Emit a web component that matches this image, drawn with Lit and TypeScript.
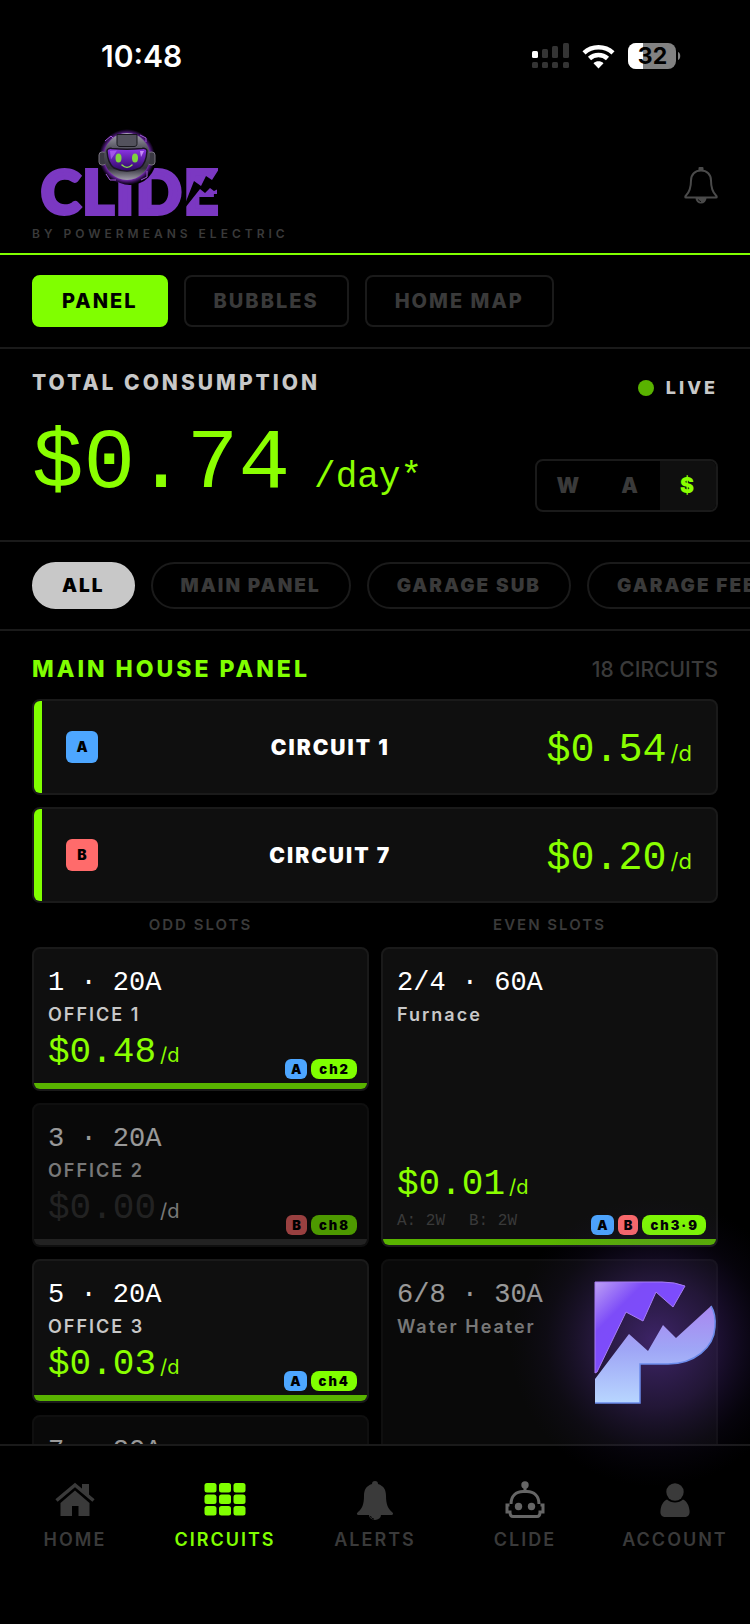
import { LitElement, html, css, svg, nothing } from "lit";
import { customElement, property, state } from "lit/decorators.js";
import { classMap } from "lit/directives/class-map.js";

interface Breaker {
    slot: string;
    name?: string;
    cost?: string;
    legs?: string[];
    channel?: string;
    phases?: string[];
    idle?: boolean;
    double?: boolean;
}

const FEEDS = [
    { leg: "A", name: "CIRCUIT 1", cost: "$0.54" },
    { leg: "B", name: "CIRCUIT 7", cost: "$0.20" },
];

const BREAKERS: Breaker[] = [
    { slot: "1 · 20A", name: "OFFICE 1", cost: "$0.48", phases: ["A"], channel: "ch2" },
    { slot: "2/4 · 60A", name: "Furnace", cost: "$0.01", legs: ["A: 2W", "B: 2W"], phases: ["A", "B"], channel: "ch3·9", double: true },
    { slot: "3 · 20A", name: "OFFICE 2", cost: "$0.00", phases: ["B"], channel: "ch8", idle: true },
    { slot: "5 · 20A", name: "OFFICE 3", cost: "$0.03", phases: ["A"], channel: "ch4" },
    { slot: "6/8 · 30A", name: "Water Heater", idle: true, double: true },
    { slot: "7 · 20A", idle: true },
];

const NAV_ICONS: Record<string, unknown> = {
    HOME: svg`
        <path d="M1.500 18.500 20 3 38.500 18.500" fill="none" stroke="currentColor" stroke-width="3.500"/>
        <path d="M27 2h7v13l-7-6z"/>
        <path d="M5.500 21 20 8.500 34.500 21V34H23.500V24H17V34H5.500z"/>`,
    CIRCUITS: svg`
        ${[1, 12.5, 24].map(y => [0, 14.5, 29].map(x => svg`<rect x=${x - 0.5} y=${y} width="12" height="9.500" rx="2.500"/>`))}`,
    ALERTS: svg`
        <path d="M20 -1c-2 0-3 1-3 3-6 2-8 6-8 12 0 8-2 13-6 16-2 2-1 3 1 3h32c2 0 3-1 1-3-4-3-6-8-6-16 0-6-2-10-8-12 0-2-1-3-3-3z"/>
        <path d="M14 33a6 5 0 0 0 12 0z"/>
        <path d="M15.500 34c.5 2 2 3 3.500 3" fill="none" stroke="#000" stroke-width="1"/>`,
    CLIDE: svg`
        <g fill="none" stroke="currentColor" stroke-width="3">
            <path d="M20 9V3"/>
            <path d="M6 22C6 14 11 9.500 18 9.500h4c7 0 12 4.500 12 12.500"/>
            <path d="M4.500 23H2v7h3c0 3 1 4.500 3 4.500h24c2 0 3-1.500 3-4.500h3v-7h-2.500"/>
        </g>
        <circle cx="20" cy="3" r="3.700"/>
        <circle cx="13.500" cy="24.500" r="3.700"/>
        <circle cx="26.500" cy="24.500" r="3.700"/>`,
    ACCOUNT: svg`
        <circle cx="20" cy="10" r="8.700"/>
        <path d="M12 17.500c4 4 12 4 16 0 4 2 6 6 6.500 11 .5 4-1 6.500-5 6.500h-19c-4 0-5.500-2.500-5-6.500.5-5 2.500-9 6.500-11z"/>`,
};

@customElement("breaker-card")
export class BreakerCard extends LitElement {
    static styles = css`
        :host {
            display: block;
        }
        .card {
            display: flex;
            flex-direction: column;
            height: 100%;
            min-height: 144px;
            box-sizing: border-box;
            background: #0f0f0f;
            border: 2px solid #1a1a1a;
            border-radius: 8px;
            overflow: hidden;
        }
        .idle {
            opacity: 0.6;
        }
        .body {
            flex: 1;
            display: flex;
            flex-direction: column;
            padding: 16px 10px 4px 14px;
        }
        .slot {
            font: 400 27px/36px "Liberation Mono", monospace;
            color: #fff;
            white-space: pre;
        }
        .name {
            margin-top: 2px;
            font-size: 18px;
            line-height: 24px;
            font-weight: 600;
            letter-spacing: 2px;
            color: #c8c8c8;
        }
        .foot {
            flex: 1;
            display: flex;
            justify-content: space-between;
            align-items: flex-end;
        }
        .reading {
            padding-bottom: 4px;
        }
        .cost {
            font: 400 36px/44px "Liberation Mono", monospace;
            color: #8aff00;
            white-space: nowrap;
        }
        .unit {
            font: 400 20px/24px Inter, sans-serif;
            margin-left: 4px;
        }
        .idle .cost {
            color: #3a3a3a;
        }
        .idle .unit {
            color: #c8c8c8;
        }
        .legs {
            display: flex;
            gap: 24px;
            font: 400 16px/20px "Liberation Mono", monospace;
            color: #3a3a3a;
            margin-top: 4px;
        }
        .badges {
            display: flex;
            gap: 4px;
        }
        .badge {
            box-sizing: border-box;
            font-size: 13px;
            line-height: 20px;
            font-weight: 900;
            padding: 0 5px 0 6px;
            border-radius: 6px;
            color: #000;
            letter-spacing: 1px;
            background: #4da6ff;
        }
        .b {
            background: #ff6b6b;
        }
        .channel {
            background: #80ff00;
            border-radius: 8px;
            padding: 0 7px 0 8px;
            letter-spacing: 2px;
        }
        .bar {
            height: 6px;
            background: #59b300;
        }
        .idle .bar {
            background: #3a3a3a;
        }
    `;

    @property({ attribute: false }) breaker!: Breaker;

    render() {
        const b = this.breaker;
        return html`
            <div class=${classMap({ card: true, idle: !!b.idle })}>
                <div class="body">
                    <div class="slot">${b.slot}</div>
                    ${b.name ? html`<div class="name">${b.name}</div>` : nothing}
                    <div class="foot">
                        <div class="reading">
                            ${b.cost ? html`<div class="cost">${b.cost}<span class="unit">/d</span></div>` : nothing}
                            ${b.legs ? html`<div class="legs">${b.legs.map(l => html`<span>${l}</span>`)}</div>` : nothing}
                        </div>
                        <div class="badges">
                            ${(b.phases ?? []).map(p => html`<span class="badge ${p.toLowerCase()}">${p}</span>`)}
                            ${b.channel ? html`<span class="badge channel">${b.channel}</span>` : nothing}
                        </div>
                    </div>
                </div>
                <div class="bar"></div>
            </div>
        `;
    }
}

@customElement("app-root")
export class AppRoot extends LitElement {
    static styles = css`
        :host {
            display: flex;
            flex-direction: column;
            position: relative;
            height: 100vh;
            overflow: hidden;
            background: #000;
            color: #fff;
            font-family: Inter, "Liberation Sans", sans-serif;
        }
        button {
            font: inherit;
            color: inherit;
            background: none;
            border: none;
            margin: 0;
            padding: 0;
            cursor: pointer;
            white-space: nowrap;
        }
        .status {
            display: flex;
            justify-content: space-between;
            align-items: center;
            height: 112px;
            padding: 0 69px 0 101px;
            box-sizing: border-box;
        }
        .time {
            font-size: 30px;
            line-height: 36px;
            font-weight: 600;
        }
        .indicators {
            display: flex;
            align-items: center;
            gap: 13px;
        }
        .header {
            display: flex;
            justify-content: space-between;
            align-items: center;
            padding: 15px 32px 10px;
            border-bottom: 2px solid #80ff00;
        }
        .logo {
            display: block;
        }
        .logo text {
            font-family: Lato, Inter, sans-serif;
            font-weight: 900;
            font-size: 60px;
            letter-spacing: 2px;
        }
        .byline {
            font-size: 12px;
            line-height: 18px;
            font-weight: 600;
            letter-spacing: 4px;
            color: #3a3a3a;
            margin-top: 6px;
        }
        .bell {
            color: #4a4a4a;
        }
        .bell svg {
            display: block;
        }
        .tabs, .filters {
            display: flex;
            gap: 16px;
            padding: 20px 32px;
            border-bottom: 2px solid #1a1a1a;
            overflow: hidden;
        }
        .tab, .pill {
            flex: none;
            border: 2px solid #1a1a1a;
            letter-spacing: 2px;
            color: #3a3a3a;
            padding: 0 28px;
        }
        .tab {
            font-size: 20px;
            font-weight: 800;
            line-height: 48px;
            border-radius: 8px;
        }
        .pill {
            font-size: 19px;
            font-weight: 900;
            line-height: 43px;
            border-radius: 24px;
        }
        .tab.on {
            background: #80ff00;
            border-color: #80ff00;
            color: #000;
        }
        .pill.on {
            background: #c8c8c8;
            border-color: #c8c8c8;
            color: #000;
        }
        .total {
            display: flex;
            justify-content: space-between;
            padding: 20px 32px 28px;
            border-bottom: 2px solid #1a1a1a;
        }
        .label {
            font-size: 21px;
            line-height: 28px;
            font-weight: 800;
            letter-spacing: 3px;
            color: #c8c8c8;
        }
        .amount {
            display: flex;
            align-items: baseline;
            gap: 24px;
            margin-top: 19px;
            font: 400 86px/96px "Liberation Mono", monospace;
            color: #8aff00;
        }
        .per {
            font-size: 36px;
            line-height: 40px;
        }
        .side {
            display: flex;
            flex-direction: column;
            justify-content: space-between;
            align-items: flex-end;
            padding-top: 7px;
        }
        .live {
            display: flex;
            align-items: center;
            gap: 12px;
            font-size: 18px;
            line-height: 24px;
            font-weight: 800;
            letter-spacing: 3px;
            color: #c8c8c8;
        }
        .dot {
            width: 16px;
            height: 16px;
            border-radius: 50%;
            background: #59b300;
        }
        .units {
            display: flex;
            border: 2px solid #1a1a1a;
            border-radius: 8px;
            overflow: hidden;
        }
        .units button {
            padding: 0 20px;
            font-size: 21px;
            line-height: 49px;
            font-weight: 900;
            letter-spacing: 2px;
            color: #3a3a3a;
        }
        .units .on {
            background: #0f0f0f;
            color: #8aff00;
        }
        .content {
            flex: 1;
            min-height: 0;
            overflow: hidden;
            padding: 22px 32px 0;
        }
        .section {
            display: flex;
            justify-content: space-between;
            align-items: center;
            margin-bottom: 14px;
        }
        .section h2 {
            margin: 0;
            font-size: 23px;
            line-height: 32px;
            font-weight: 800;
            letter-spacing: 3px;
            color: #80ff00;
        }
        .count {
            font-size: 21px;
            font-weight: 500;
            color: #3a3a3a;
        }
        .feed {
            display: flex;
            align-items: center;
            justify-content: space-between;
            height: 96px;
            box-sizing: border-box;
            margin-bottom: 12px;
            padding-right: 24px;
            background: #0f0f0f;
            border: 2px solid #1a1a1a;
            border-radius: 8px;
            overflow: hidden;
        }
        .stripe {
            align-self: stretch;
            width: 8px;
            margin-right: 24px;
            background: #80ff00;
        }
        .leg {
            width: 32px;
            border-radius: 6px;
            background: #4da6ff;
            color: #000;
            font-size: 14px;
            line-height: 32px;
            font-weight: 900;
            text-align: center;
        }
        .leg.b {
            background: #ff6b6b;
        }
        .feed-name {
            flex: 1;
            padding-left: 16px;
            text-align: center;
            font-size: 21px;
            font-weight: 900;
            letter-spacing: 2px;
        }
        .feed-cost {
            padding-top: 8px;
            font: 400 40px/48px "Liberation Mono", monospace;
            color: #8aff00;
        }
        .feed-unit {
            font: 400 22px/24px Inter, sans-serif;
            margin-left: 4px;
        }
        .slots {
            display: grid;
            grid-template-columns: 1fr 1fr;
            grid-auto-rows: minmax(144px, auto);
            grid-auto-flow: dense;
            gap: 12px;
        }
        .heads {
            display: grid;
            grid-template-columns: 1fr 1fr;
            gap: 12px;
            margin-bottom: 12px;
            text-align: center;
            font-size: 15px;
            line-height: 20px;
            font-weight: 600;
            letter-spacing: 2px;
            color: #3a3a3a;
        }
        .odd {
            grid-column: 1;
        }
        .even {
            grid-column: 2;
            grid-row: span 2;
        }
        .nav {
            display: grid;
            grid-template-columns: repeat(5, 1fr);
            height: 180px;
            box-sizing: border-box;
            padding-top: 36px;
            border-top: 2px solid #1a1a1a;
            background: #000;
        }
        .nav button {
            display: flex;
            flex-direction: column;
            align-items: center;
            align-self: start;
            gap: 10px;
            font-size: 18px;
            line-height: 24px;
            font-weight: 600;
            letter-spacing: 2px;
            color: #3a3a3a;
        }
        .nav svg {
            display: block;
            fill: currentColor;
            overflow: visible;
        }
        .nav .robot svg {
            color: #666;
        }
        .nav .on {
            color: #80ff00;
        }
        .assistant {
            position: absolute;
            right: 33px;
            bottom: 220px;
        }
        .assistant svg {
            display: block;
            overflow: visible;
        }
    `;

    @state() private view = "PANEL";
    @state() private unit = "$";
    @state() private filter = "ALL";
    @state() private page = "CIRCUITS";

    private renderStatus() {
        return html`
            <div class="status">
                <div class="time">10:48</div>
                <div class="indicators">
                    <svg width="37" height="26" viewBox="0 0 37 26" fill="#343434">
                        <rect x="0" y="8" width="6" height="7" rx="1.500" fill="#fff"/>
                        <rect x="10" y="6" width="6" height="9" rx="1.500"/>
                        <rect x="20" y="3" width="6" height="12" rx="1.500"/>
                        <rect x="31" y="0" width="6" height="15" rx="1.500"/>
                        ${[0, 10, 20, 31].map(x => svg`<rect x=${x} y="19" width="6" height="6" rx="1.500"/>`)}
                    </svg>
                    <svg width="33" height="25" viewBox="0 0 33 25" fill="none" stroke="#fff" stroke-width="4.500">
                        <path d="M2 8.800C10 1.300 23 1.300 31 8.800"/>
                        <path d="M7.500 14.500C12.500 9.800 20.500 9.800 25.500 14.500"/>
                        <path d="M16.500 24.500l-5-5.200c2.800-2.600 7.200-2.600 10 0z" fill="#fff" stroke="none"/>
                    </svg>
                    <svg width="53" height="26" viewBox="0 0 53 26">
                        <clipPath id="cell"><rect width="48" height="26" rx="8"/></clipPath>
                        <rect width="48" height="26" rx="8" fill="#828282"/>
                        <rect width="15" height="26" fill="#fff" clip-path="url(#cell)"/>
                        <path d="M50 9c3 1 3 7 0 8z" fill="#828282"/>
                        <text x="24.500" y="21" text-anchor="middle" font-family="Inter, sans-serif" font-size="23" font-weight="700">32</text>
                    </svg>
                </div>
            </div>
        `;
    }

    private renderLogo() {
        return html`
            <svg class="logo" width="200" height="92" viewBox="0 0 200 92" role="img" aria-label="CLIDE">
                <defs>
                    <radialGradient id="aura">
                        <stop offset="0.800" stop-color="#a33cf0" stop-opacity="0.800"/>
                        <stop offset="1" stop-color="#7a1fd0" stop-opacity="0"/>
                    </radialGradient>
                    <linearGradient id="shell" x1="0" y1="0" x2="0" y2="1">
                        <stop offset="0" stop-color="#a5a3b0"/>
                        <stop offset="0.300" stop-color="#5a5965"/>
                        <stop offset="0.750" stop-color="#34343c"/>
                        <stop offset="1" stop-color="#a09cab"/>
                    </linearGradient>
                    <linearGradient id="visor" x1="0" y1="0" x2="0" y2="1">
                        <stop offset="0" stop-color="#8f35ea"/>
                        <stop offset="1" stop-color="#2c0763"/>
                    </linearGradient>
                </defs>
                <text x="9" y="87" fill="#7b38c2" stroke="#7b38c2" stroke-width="4">CLIDE</text>
                <!-- power bolt cut through the last letter -->
                <path d="M160 50h25v17h-25z" fill="#7b38c2"/>
                <path d="M187 42l-7 11-6-4-5 10-7-5-9 23v4l15-19 5 4 5-5 4 3 6-3z" fill="#000"/>
                <circle cx="98" cy="32" r="26" fill="#000"/>
                <circle cx="95" cy="30" r="28" fill="url(#aura)"/>
                <path d="M73 14l6-5 3 3M108 8l6 3 0 4M74 47l4 6 6 0M109 53l6-3 0-6" fill="none" stroke="#a55ade" stroke-width="1"/>
                <rect x="67" y="25" width="7" height="13" rx="3" fill="#3a3942" stroke="#77727f" stroke-width="1"/>
                <rect x="116" y="25" width="7" height="13" rx="3" fill="#3a3942" stroke="#77727f" stroke-width="1"/>
                <ellipse cx="95" cy="29.500" rx="23" ry="23.500" fill="url(#shell)"/>
                <path d="M85 7.500h20v9c0 2-1 3-3 3H88c-2 0-3-1-3-3z" fill="#53525d" stroke="#17171c" stroke-width="1"/>
                <path d="M75 24c0-2 2-3 5-2.500 10 1 20 1 30 0 3-.5 5 .5 5 2.500-.5 8-3 14-7 17-8 4-18 4-26 0-4-3-6.500-9-7-17z" fill="url(#visor)" stroke="#1a1422" stroke-width="1.500"/>
                <path d="M78 24l7-.5-6 9z" fill="#b46af5" opacity="0.700"/>
                <path d="M112 24l-4 0 1 6z" fill="#d9a9ff" opacity="0.800"/>
                <ellipse cx="86.500" cy="31" rx="3" ry="4.500" fill="#7ed33f"/>
                <ellipse cx="103" cy="31" rx="3" ry="4.500" fill="#7ed33f"/>
                <path d="M90 38c3 3 7 3 10 0" fill="none" stroke="#8be04c" stroke-width="1.500" stroke-linecap="round"/>
            </svg>
        `;
    }

    private renderAssistant() {
        return html`
            <button class="assistant" aria-label="Assistant">
                <svg width="122" height="122" viewBox="0 0 122 122">
                    <defs>
                        <radialGradient id="glow">
                            <stop offset="0" stop-color="#7340c8" stop-opacity="0.500"/>
                            <stop offset="0.450" stop-color="#6a3cb8" stop-opacity="0.260"/>
                            <stop offset="0.750" stop-color="#4b2c90" stop-opacity="0.080"/>
                            <stop offset="1" stop-color="#2a1a60" stop-opacity="0"/>
                        </radialGradient>
                        <linearGradient id="upper" x1="0" y1="0" x2="0.700" y2="0.700">
                            <stop offset="0" stop-color="#bda0f5"/>
                            <stop offset="0.400" stop-color="#7d4cf8"/>
                            <stop offset="1" stop-color="#7d4cff"/>
                        </linearGradient>
                        <linearGradient id="lower" x1="0" y1="0" x2="0" y2="1">
                            <stop offset="0" stop-color="#a987f0"/>
                            <stop offset="0.450" stop-color="#9fa6f6"/>
                            <stop offset="1" stop-color="#b8d6ff"/>
                        </linearGradient>
                    </defs>
                    <circle cx="60" cy="60" r="145" fill="url(#glow)"/>
                    <path d="M0 0H67Q80 0 90 4L78 25 61 10 48 39 31 30 2 90 0 91z" fill="url(#upper)" stroke="#a77cf5" stroke-width="1"/>
                    <path d="M0 97 34 52 53 69 68 43 81 56 116 24Q121 32 120 45C119 66 99 82 73 82H45V121H0z" fill="url(#lower)"/>
                    <path d="M116 24Q121 32 120 45C119 66 99 82 73 82H45V121H0" fill="none" stroke="#6b8bea" stroke-width="1.500"/>
                </svg>
            </button>
        `;
    }

    render() {
        return html`
            ${this.renderStatus()}
            <header class="header">
                <div>
                    ${this.renderLogo()}
                    <div class="byline">BY POWERMEANS ELECTRIC</div>
                </div>
                <button class="bell" aria-label="Notifications">
                    <svg width="34" height="38" viewBox="0 0 34 38" fill="none" stroke="currentColor" stroke-width="2" stroke-linejoin="round">
                        <path d="M17 4.500c-6 0-10 4-10 10 0 8-2 12-5 15-1 1-1 2 0 2h30c1 0 1-1 0-2-3-3-5-7-5-15 0-6-4-10-10-10z"/>
                        <path d="M15.500 4V2h3v2" fill="currentColor"/>
                        <path d="M12.500 32a4.500 4.500 0 0 0 9 0z" fill="currentColor"/>
                        <path d="M14.500 33.500c.5 1.500 1.500 2 2.500 2" stroke="#000" stroke-width="1"/>
                    </svg>
                </button>
            </header>
            <div class="tabs">
                ${["PANEL", "BUBBLES", "HOME MAP"].map(t => html`
                    <button class=${classMap({ tab: true, on: t === this.view })} @click=${() => (this.view = t)}>${t}</button>`)}
            </div>
            <section class="total">
                <div>
                    <div class="label">TOTAL CONSUMPTION</div>
                    <div class="amount"><span>$0.74</span><span class="per">/day*</span></div>
                </div>
                <div class="side">
                    <div class="live"><span class="dot"></span>LIVE</div>
                    <div class="units">
                        ${["W", "A", "$"].map(u => html`
                            <button class=${classMap({ on: u === this.unit })} @click=${() => (this.unit = u)}>${u}</button>`)}
                    </div>
                </div>
            </section>
            <div class="filters">
                ${["ALL", "MAIN PANEL", "GARAGE SUB", "GARAGE FEED"].map(f => html`
                    <button class=${classMap({ pill: true, on: f === this.filter })} @click=${() => (this.filter = f)}>${f}</button>`)}
            </div>
            <main class="content">
                <div class="section">
                    <h2>MAIN HOUSE PANEL</h2>
                    <span class="count">18 CIRCUITS</span>
                </div>
                ${FEEDS.map(f => html`
                    <div class="feed">
                        <span class="stripe"></span>
                        <span class="leg ${f.leg.toLowerCase()}">${f.leg}</span>
                        <span class="feed-name">${f.name}</span>
                        <span class="feed-cost">${f.cost}<span class="feed-unit">/d</span></span>
                    </div>`)}
                <div class="heads"><span>ODD SLOTS</span><span>EVEN SLOTS</span></div>
                <div class="slots">
                    ${BREAKERS.map(b => html`<breaker-card class=${b.double ? "even" : "odd"} .breaker=${b}></breaker-card>`)}
                </div>
            </main>
            <nav class="nav">
                ${Object.entries(NAV_ICONS).map(([name, icon]) => html`
                    <button class=${classMap({ on: name === this.page, robot: name === "CLIDE" })} @click=${() => (this.page = name)}>
                        <svg width="40" height="36" viewBox="0 0 40 36">${icon}</svg>
                        ${name}
                    </button>`)}
            </nav>
            ${this.renderAssistant()}
        `;
    }
}
